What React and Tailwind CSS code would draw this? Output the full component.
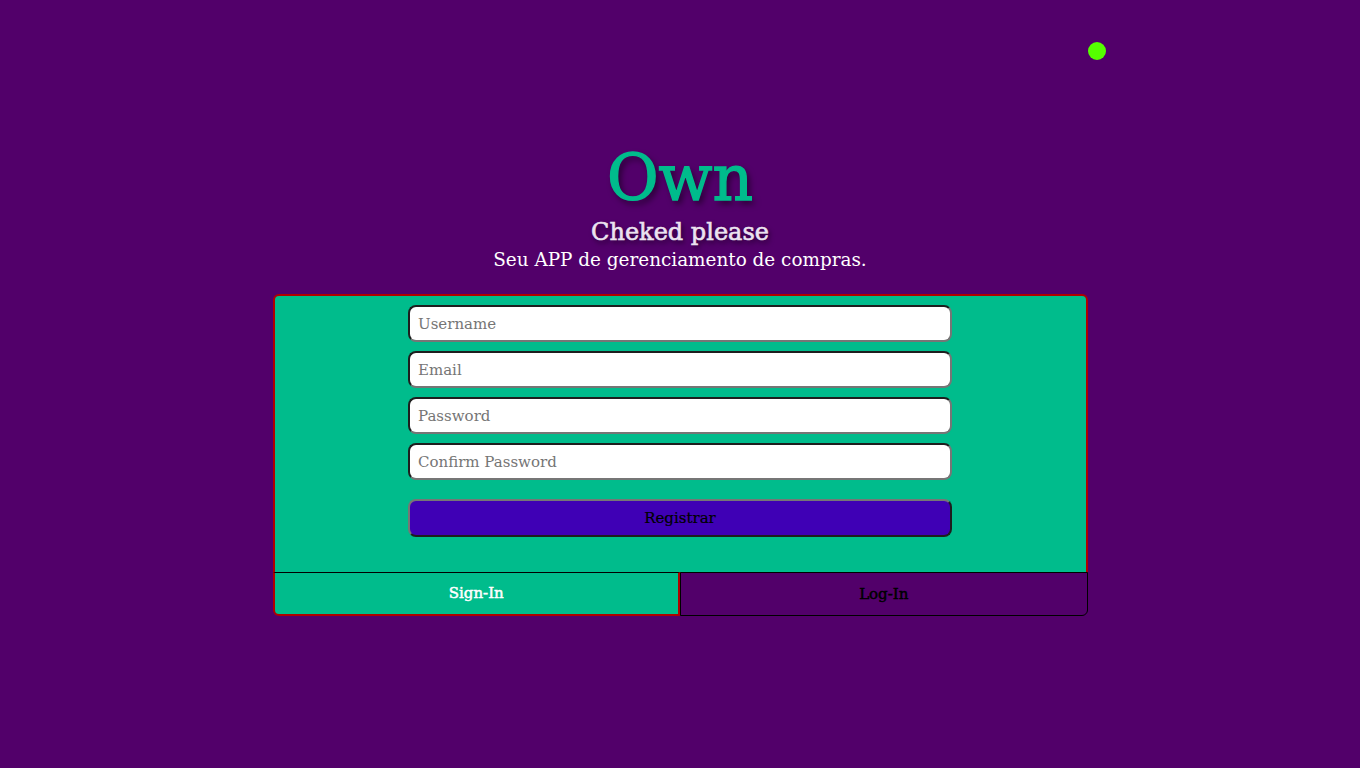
import React from 'react';

const inputClass =
  "w-[544px] h-[37px] bg-white rounded-lg border-2 border-t-[#1e1e1e] border-l-[#1e1e1e] border-b-[#767676] border-r-[#767676] px-2 font-['DejaVu_Serif',serif] text-[15px] text-black placeholder:text-[#757575] outline-none";

const App = () => {
  return (
    <div className="relative min-h-[768px] w-full bg-[#52006a] text-white font-['DejaVu_Serif',serif]">
      {/* status dot */}
      <span className="absolute left-[1088px] top-[42px] w-[18px] h-[18px] rounded-full bg-[#55ff00]" />

      <div className="flex flex-col items-center pt-[141px]">
        <h1 className="text-[63px] leading-[76px] text-[#00bc8c] [-webkit-text-stroke:1.4px_#00bc8c] [text-shadow:3px_4px_6px_rgba(0,0,0,0.55)]">
          Own
        </h1>
        <h2 className="text-[24px] leading-[30px] text-[#ece3f0] [-webkit-text-stroke:0.6px_#ece3f0] [text-shadow:2px_3px_5px_rgba(0,0,0,0.6)]">
          Cheked please
        </h2>
        <p className="text-[18.4px] leading-[26px] text-white">Seu APP de gerenciamento de compras.</p>

        {/* card */}
        <div className="mt-[21px] w-[815px]">
          <form className="bg-[#00bc8c] border-2 border-[#b00000] rounded-t-md flex flex-col items-center pt-[9px] pb-[35px] gap-[9px]">
            <input type="text" placeholder="Username" className={inputClass} />
            <input type="email" placeholder="Email" className={inputClass} />
            <input type="password" placeholder="Password" className={inputClass} />
            <input type="password" placeholder="Confirm Password" className={inputClass} />
            <button
              type="button"
              className="mt-[10px] w-[544px] h-[38px] rounded-lg bg-[#3f00b5] border-2 border-t-[#767676] border-l-[#767676] border-b-[#1e1e1e] border-r-[#1e1e1e] font-['DejaVu_Serif',serif] text-[15px] text-black [-webkit-text-stroke:0.2px_black]"
            >
              Registrar
            </button>
          </form>

          {/* tabs */}
          <div className="flex -mt-[2px]">
            <button
              type="button"
              className="w-1/2 h-[44px] bg-[#00bc8c] border-2 border-t border-t-black border-[#b00000] rounded-bl-md font-['DejaVu_Serif',serif] text-[15px] text-white [-webkit-text-stroke:0.5px_white]"
            >
              Sign-In
            </button>
            <button
              type="button"
              className="w-1/2 h-[44px] bg-[#52006a] border border-black rounded-br-md font-['DejaVu_Serif',serif] text-[15px] text-black [-webkit-text-stroke:0.5px_black]"
            >
              Log-In
            </button>
          </div>
        </div>
      </div>
    </div>
  );
};

export default App;
